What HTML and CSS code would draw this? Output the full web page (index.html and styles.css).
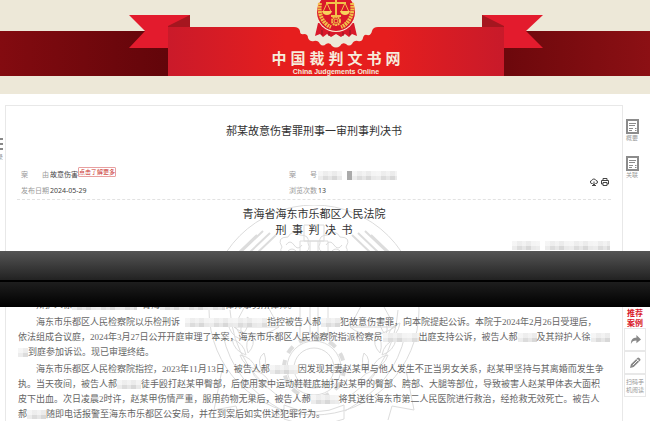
FILE: index.html
```html
<!DOCTYPE html>
<html lang="zh-CN">
<head>
    <meta charset="UTF-8">
    <meta name="viewport" content="width=device-width, initial-scale=1.0">
    <title>中国裁判文书网</title>
    <link rel="stylesheet" href="styles.css">
</head>
<body>
    <header class="banner">
        <svg class="ribbon" viewBox="128 0 416 76" width="416" height="76" aria-hidden="true">
            <defs>
                <linearGradient id="red" x1="0" x2="1">
                    <stop offset="0" stop-color="#ca1a2a"/>
                    <stop offset=".35" stop-color="#e61e1e"/>
                    <stop offset=".65" stop-color="#e61e1e"/>
                    <stop offset="1" stop-color="#c81a2a"/>
                </linearGradient>
            </defs>
            <path fill="#ede8d8" d="M190 0H482V60H190Z"/>
            <path fill="#e31b2d" d="M129 15H190V27H168V48H129L145 31Z"/>
            <path fill="#e31b2d" d="M543 15H482V27H504V48H543L526 31Z"/>
            <path fill="#a5161f" d="M168 26L190 15V28H168ZM504 26L482 15V28H504Z"/>
            <path fill="url(#red)" d="M168 27H294Q299 27 300 31Q300 35 304 34Q308 34 308 38Q310 42 314 41Q318 40 320 44Q323 47 326 44Q330 42 332 46Q336 49 340 46Q342 42 346 44Q349 47 352 44Q354 40 358 41Q362 42 363 38Q364 34 367 35Q371 36 372 31Q373 27 378 27H504V76H168Z"/>
            <path fill="#d9182a" d="M318 23L315 36L320 34L323 37L327 34L331 37L336 34L341 37L345 34L349 37L352 34L357 36L354 23Z"/>
            <path stroke="#8f1420" stroke-width="1" d="M322 30V35M329 32V36M343 32V36M350 30V35"/>
            <circle cx="336" cy="12" r="20" fill="#fbe6d0"/>
            <circle cx="336" cy="12" r="19" fill="#d9182a"/>
            <g fill="none" stroke="#f2c14a">
                <path stroke-width="4" stroke-dasharray="2 .7" d="M320 3C318 14 323 24 331 27M352 3C354 14 349 24 341 27"/>
                <path stroke-width="2" d="M336 0V15M326 3H346M331 16H341"/>
                <path d="M327 3L323 12M327 3L331 12M345 3L341 12M345 3L349 12"/>
                <circle cx="336" cy="21" r="4" stroke-width="2" stroke-dasharray="2 .5"/>
                <circle cx="336" cy="21" r="2"/>
            </g>
            <path fill="#f7d25c" d="M322 11H332Q331 15 327 15Q323 15 322 11ZM340 11H350Q349 15 345 15Q341 15 340 11Z"/>
        </svg>
        <h1 class="site-name">中国裁判文书网</h1>
        <p class="site-sub">China Judgements Online</p>
    </header>

    <main class="page page-top">
        <aside class="left-nav">
            <a href="#" aria-label="目录"><i></i><i></i><i></i><span>录</span></a>
        </aside>
        <article class="card">
            <svg class="watermark" viewBox="0 0 220 150" aria-hidden="true"><use href="#emblem"/></svg>
            <h2 class="doc-title">郝某故意伤害罪刑事一审刑事判决书</h2>
            <div class="meta">
                <dl>
                    <div><dt><span>案</span><span>由</span></dt><dd>故意伤害<button class="more" type="button">点击了解更多</button></dd></div>
                    <div><dt>发布日期</dt><dd>2024-05-29</dd></div>
                </dl>
                <dl>
                    <div><dt><span>案</span><span>号</span></dt><dd><span class="mask w24 gap"></span><span class="mask w50 dark"></span></dd></div>
                    <div><dt>浏览次数</dt><dd>13</dd></div>
                </dl>
                <div class="tools">
                    <a href="#" aria-label="下载"><svg viewBox="0 0 16 16"><path d="M5 11H4a3 3 0 0 1-.5-6A4.500 4.500 0 0 1 12 5a3 3 0 0 1 0 6h-1M8 7v7M5.500 11.500L8 14l2.500-2.500M4 15h8"/></svg></a>
                    <a href="#" aria-label="打印"><svg viewBox="0 0 16 16"><path d="M4 5V1h8v4M4 12H1V5h14v7h-3M4 9h8v6H4z"/></svg></a>
                </div>
            </div>
            <h3 class="court">青海省海东市乐都区人民法院</h3>
            <h3 class="court">刑&nbsp; 事&nbsp; 判&nbsp; 决&nbsp; 书</h3>
            <p class="case-no"><span class="mask w28 gap"></span><span class="mask w65"></span></p>
        </article>
        <aside class="side">
            <a class="side-link" href="#"><svg viewBox="0 0 13 15"><use href="#sheet"/></svg>概要</a>
            <a class="side-link" href="#"><svg viewBox="0 0 13 15"><use href="#sheet"/></svg>关联</a>
        </aside>
    </main>

    <div class="divider"></div>

    <section class="page page-bottom">
        <div class="left-nav"></div>
        <article class="card">
            <svg class="watermark" viewBox="0 102 220 120" aria-hidden="true"><use href="#emblem"/></svg>
            <div class="text">
                <p class="indent">辩护人徐<span class="mask w65 gap"></span>青海<span class="mask w65"></span>律师事务所律师。</p>
                <p><span class="indent">海东市乐都区人民检察院以乐检刑诉</span><span class="mask w82 push"></span>指控被告人郝<span class="mask w19"></span>犯故意伤害罪，向本院提起公诉。本院于2024年2月26日受理后，<br>
                依法组成合议庭，2024年3月27日公开开庭审理了本案，海东市乐都区人民检察院指派检察员<span class="mask w36"></span>出庭支持公诉，被告人郝<span class="mask w19"></span>及其辩护人徐<span class="mask w19"></span><br>
                <span class="mask w10"></span>到庭参加诉讼。现已审理终结。</p>
                <p><span class="indent">海东市乐都区人民检察院指控，2023年11月13日，被告人郝</span><span class="mask w28"></span>因发现其妻赵某甲与他人发生不正当男女关系，赵某甲坚持与其离婚而发生争<br>
                执。当天夜间，被告人郝<span class="mask w24"></span>徒手殴打赵某甲臀部，后使用家中运动鞋鞋底抽打赵某甲的臀部、胯部、大腿等部位，导致被害人赵某甲体表大面积<br>
                皮下出血。次日凌晨2时许，赵某甲伤情严重，服用药物无果后，被告人郝<span class="mask w28"></span>将其送往海东市第二人民医院进行救治，经抢救无效死亡。被告人<br>
                郝<span class="mask w19"></span>随即电话报警至海东市乐都区公安局，并在到案后如实供述犯罪行为。</p>
            </div>
        </article>
        <aside class="side">
            <a class="recommend" href="#">推荐<br>案例</a>
            <a class="tile" href="#" aria-label="分享"><svg viewBox="0 0 12 12"><path d="M1 11C1 6 3 4 7 4V1l5 5-5 4V7C4 7 2 8 1 11z"/></svg></a>
            <a class="tile" href="#" aria-label="编辑"><svg viewBox="0 0 12 12"><path d="M0 12l1-4 7-7q1-1 2 0l1 1q1 1 0 2l-7 7z"/><path class="light" d="M3 9l6-6M7 2l3 3"/></svg></a>
            <a class="tile" href="#">扫码手<br>机阅读</a>
        </aside>
    </section>

    <!-- shared shapes -->
    <svg class="sprite" aria-hidden="true">
        <symbol id="sheet" viewBox="0 0 13 15">
            <path fill="none" stroke="#8c8c8c" stroke-width="2" d="M1 1h11v13H1z"/>
            <path stroke="#8c8c8c" d="M3 4.500h7M3 6.500h6M3 9.500h4M9 9.500h1.500M3 11.500h3M9 11.500h1.500"/>
        </symbol>
        <g id="emblem" fill="none" stroke="#dcdcdc">
            <circle cx="110" cy="105" r="105"/>
            <circle cx="110" cy="163" r="27"/>
            <circle cx="110" cy="163" r="20"/>
            <circle cx="110" cy="163" r="30" stroke-width="4" stroke-dasharray="8 7.700"/>
            <path stroke-width="2" d="M45 48l21-20M51 50l21-20M38 46l21-20M32 50l21-20M175 48l-21-20M169 50l-21-20M182 46l-21-20M188 50l-21-20"/>
            <path d="M100 20h20v16h-20zM96 36h28v96M96 36v96M106 36v94M114 36v94"/>
            <path d="M78 42q-6-10 6-10q4-8 12-2q10 0 8 8q4 8-6 10q-10 4-16 0q-8 0-4-6zM142 42q6-10-6-10q-4-8-12-2q-10 0-8 8q-4 8 6 10q10 4 16 0q8 0 4-6z"/>
            <path d="M82 40q4-6 8 0t8 0M122 40q4-6 8 0t8 0M84 46q4-4 8 0M128 46q4-4 8 0"/>
            <path d="M52 80L30 122h45zM168 80l-22 42h45zM30 122q20 16 45 0M146 122q20 16 45 0"/>
            <path d="M26 105q4 60 60 94M194 105q-4 60-60 94M19 130q10 48 60 76M201 130q-10 48-60 76"/>
            <path d="M24 118q12 4 12 16q-10-4-12-16zM28 134q12 4 14 16q-12-4-14-16zM36 150q12 2 16 14q-12-2-16-14zM48 166q12 0 18 12q-14 0-18-12zM196 118q-12 4-12 16q10-4 12-16zM192 134q-12 4-14 16q12-4 14-16zM184 150q-12 2-16 14q12-2 16-14zM172 166q-12 0-18 12q14 0 18-12z"/>
            <path d="M44 112q-10 6-6 18q8-8 6-18zM48 130q-8 6-4 18q8-8 4-18zM60 148q-8 6-2 18q6-8 2-18zM176 112q10 6 6 18q-8-8-6-18zM172 130q8 6 4 18q-8-8-4-18zM160 148q8 6 2 18q-6-8-2-18z"/>
            <path d="M18 165L10 205l22-4 4 14M202 165l8 40-22-4-4 14M80 200q30 14 60 0v14q-30 12-60 0z"/>
        </g>
    </svg>
</body>
</html>
```

FILE: styles.css
```css
* {
    box-sizing: border-box;
}
body {
    margin: 0;
    background-color: #fff;
    color: #444;
    font-family: "Noto Sans", "Noto Sans CJK SC", sans-serif;
    overflow: hidden;
}
h1, h2, h3, p, dl, dd {
    margin: 0;
    font-weight: normal;
}
a {
    color: inherit;
    text-decoration: none;
}

/* banner */
.banner {
    position: relative;
    height: 94px;
    padding: 48px 0 0 22px;
    text-align: center;
    color: #f6ecdc;
    background: linear-gradient(to right, #830b10, #62050a 26%, #6d080c 78%, #8c1014) 0 31px / 100% 45px no-repeat #ede8d8;
}
.ribbon {
    position: absolute;
    top: 0;
    left: calc(50% - 197px);
}
.site-name {
    position: relative;
    padding-left: 4px;
    font: bold 15px/20px "Noto Sans CJK SC", sans-serif;
    letter-spacing: 4px;
}
.site-sub {
    position: relative;
    font: bold 7px/7px "Liberation Sans", sans-serif;
}

/* page columns */
.page {
    display: grid;
    grid-template-columns: 5px 1fr 27px;
}
.card {
    position: relative;
    border: solid #e8e8e8;
    border-width: 0 1px;
    padding: 0 11px;
}
.page-top {
    height: 157px;
    padding-top: 11px;
}
.page-top .card {
    border-top-width: 1px;
}
.watermark {
    position: absolute;
    left: 50%;
    width: 220px;
    margin-left: -110px;
}
.page-top .watermark {
    top: 99px;
    height: 150px;
    clip-path: inset(0 0 104px);
}
.page-bottom .watermark {
    top: 0;
    height: 120px;
}
.sprite {
    position: absolute;
    width: 0;
    height: 0;
}

.left-nav a {
    display: block;
    width: 3px;
    margin-top: 33px;
    overflow: hidden;
    color: #999;
    font-size: 6px;
    line-height: 9px;
}
.left-nav i {
    display: block;
    height: 2px;
    margin-bottom: 3px;
    background-color: #888;
}
.left-nav span {
    display: block;
    margin-left: -3px;
}

.doc-title {
    position: relative;
    padding-top: 17px;
    text-align: center;
    font-size: 11px;
    line-height: 16px;
    color: #333;
}
.meta {
    position: relative;
    display: grid;
    grid-template-columns: 268px 1fr auto;
    margin-top: 28px;
    padding: 0 2px 0 4px;
    border-bottom: 1px dashed #e2e2e2;
    font-size: 7px;
    line-height: 16px;
}
.meta dl div {
    display: flex;
}
.meta dt {
    display: flex;
    justify-content: space-between;
    width: 28px;
    margin-right: 1px;
    color: #999;
}
.meta dd {
    display: flex;
    align-items: center;
    height: 16px;
}
.more {
    margin-bottom: 6px;
    padding: 0;
    border: 1px solid #e8a0a0;
    border-radius: 1px;
    background: #fff;
    color: #c9302c;
    font: 6px/8px "Noto Sans CJK SC", sans-serif;
}
.tools {
    display: flex;
    gap: 3px;
    padding-top: 11px;
}
.tools svg {
    display: block;
    width: 8px;
    height: 8px;
    fill: none;
    stroke: #444;
    stroke-width: 2;
}
.court {
    position: relative;
    text-align: center;
    font: 11px/16px "Liberation Serif", "Noto Sans CJK SC", serif;
    color: #333;
}
.meta + .court {
    margin-top: 6px;
}
.case-no {
    position: relative;
    padding: 2px 1px 0 0;
    text-align: right;
    line-height: 10px;
    font-size: 9px;
}

/* hidden names */
.mask {
    display: inline-block;
    height: 9px;
    vertical-align: middle;
    background:
        linear-gradient(rgba(255,255,255,.5) 5px, transparent 5px),
        repeating-linear-gradient(90deg, #ececec 0 5px, #dcdcdc 5px 10px, #e6e6e6 10px 14px, #d8d8d8 14px 19px, #e9e9e9 19px 24px);
}
.dark {
    border-left: 5px solid #aaa;
}
.gap {
    margin-right: 5px;
}
.push {
    margin-left: 5px;
}
.w10 { width: 10px; }
.w19 { width: 19px; }
.w24 { width: 24px; }
.w28 { width: 28px; }
.w36 { width: 36px; }
.w50 { width: 50px; }
.w65 { width: 65px; }
.w82 { width: 82px; }

.divider {
    height: 56px;
    background: linear-gradient(#555, #222 29px, #000 29px, #000 31px, #1e1e1e 31px, #000);
}

/* judgement text */
.page-bottom .card {
    height: 114px;
    overflow: hidden;
}
.text {
    position: relative;
    margin-top: -9px;
    padding-left: 1px;
    font: 9px/15px "Liberation Serif", "Noto Sans CJK SC", serif;
    color: #666;
    white-space: nowrap;
}
.text p {
    margin-bottom: 2px;
}
.indent {
    padding-left: 18px;
}

/* right tools */
.side {
    padding-left: 1px;
    color: #999;
    font-size: 6px;
    line-height: 8px;
}
.side-link {
    display: block;
    width: 13px;
    margin: 14px 0 0 2px;
}
.side-link svg {
    display: block;
    width: 13px;
    height: 15px;
}
.recommend {
    display: block;
    width: 22px;
    padding-top: 1px;
    text-align: center;
    font-weight: bold;
    font-size: 8px;
    line-height: 10px;
    color: #d9182a;
}
.tile {
    display: flex;
    align-items: center;
    justify-content: center;
    width: 22px;
    height: 23px;
    border: 1px solid #e8e8e8;
    text-align: center;
}
.tile svg {
    width: 11px;
    height: 11px;
    fill: #888;
}
.tile .light {
    stroke: #fff;
    stroke-width: 1;
}
```
